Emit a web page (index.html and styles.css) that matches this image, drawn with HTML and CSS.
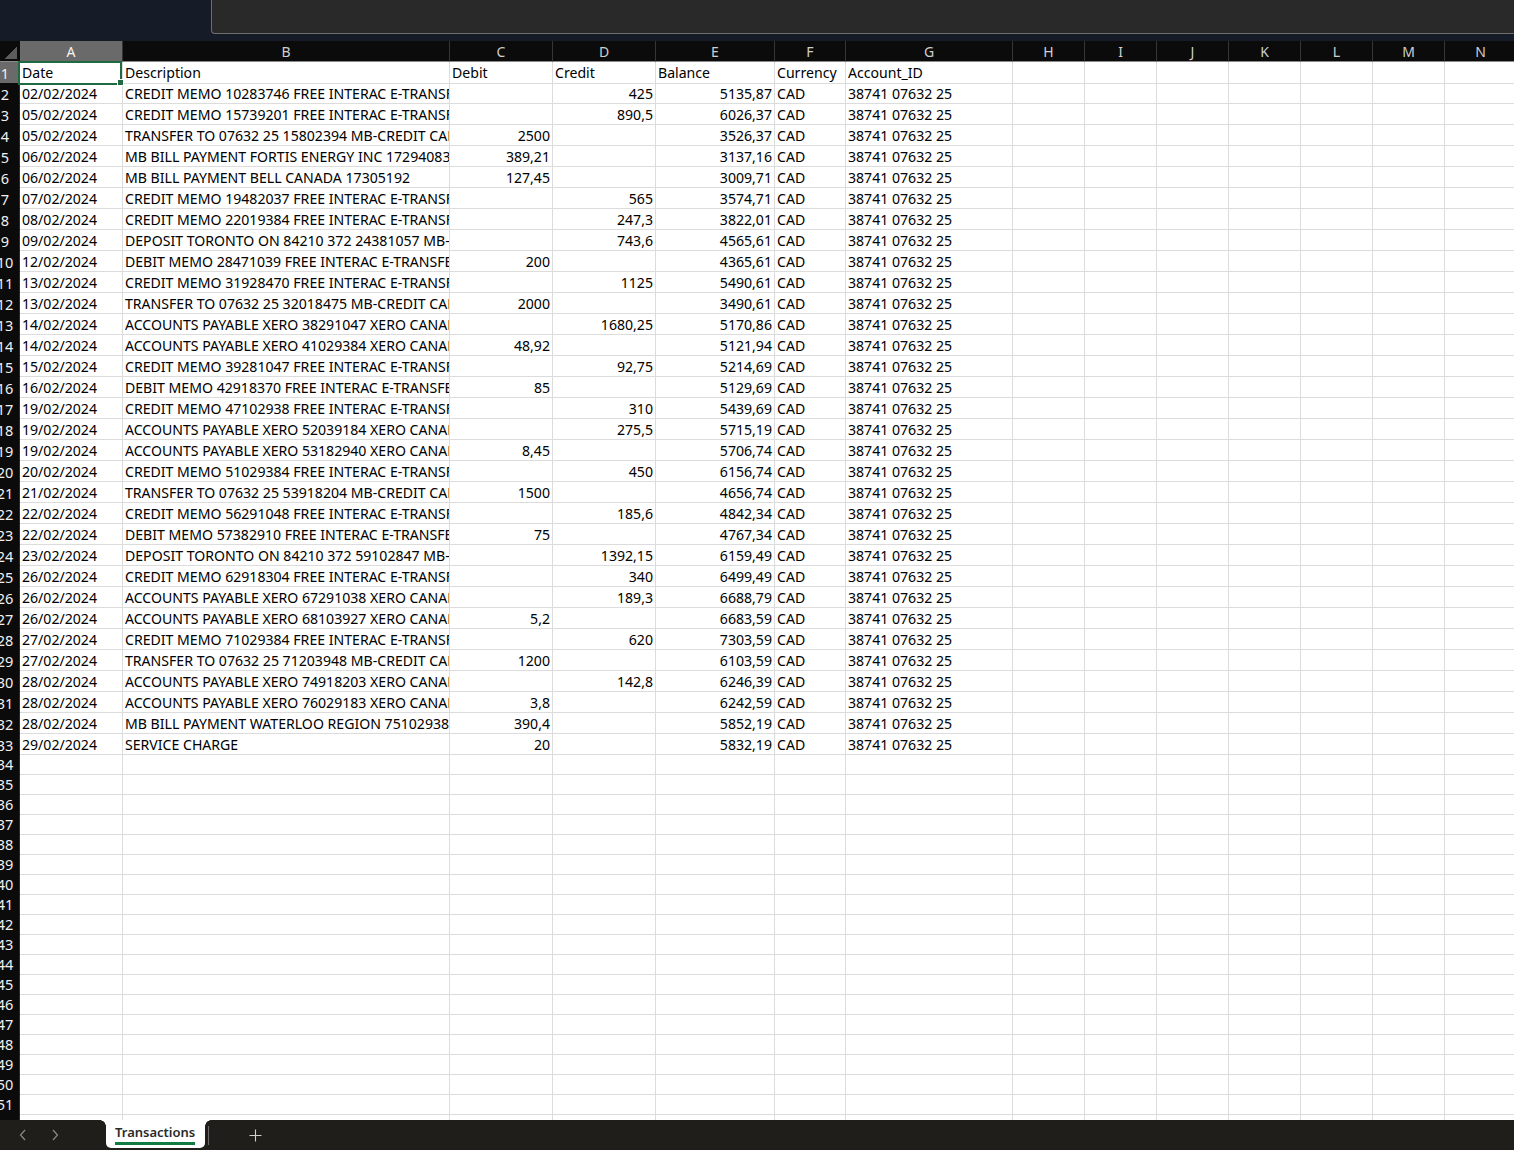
FILE: index.html
```html
<!DOCTYPE html>
<html>
<head>
<meta charset="utf-8">
<link rel="stylesheet" href="styles.css">
</head>
<body>
<div class="topbar"><div class="fbox"></div></div>
<div class="sheet">
<div class="r hd"><div class="corner"></div><div class="sel">A</div><div>B</div><div>C</div><div>D</div><div>E</div><div>F</div><div>G</div><div>H</div><div>I</div><div>J</div><div>K</div><div>L</div><div>M</div><div>N</div></div>
<div class="r"><div class="h sel"><span>1</span></div><div class="a1">Date<i class="selbox"></i><i class="handle"></i></div><div>Description</div><div>Debit</div><div>Credit</div><div>Balance</div><div>Currency</div><div>Account_ID</div><div></div><div></div><div></div><div></div><div></div><div></div><div></div></div>
<div class="r"><div class="h"><span>2</span></div><div>02/02/2024</div><div>CREDIT MEMO 10283746 FREE INTERAC E-TRANSFER</div><div class="n"></div><div class="n">425</div><div class="n">5135,87</div><div>CAD</div><div>38741 07632 25</div><div></div><div></div><div></div><div></div><div></div><div></div><div></div></div>
<div class="r"><div class="h"><span>3</span></div><div>05/02/2024</div><div>CREDIT MEMO 15739201 FREE INTERAC E-TRANSFER</div><div class="n"></div><div class="n">890,5</div><div class="n">6026,37</div><div>CAD</div><div>38741 07632 25</div><div></div><div></div><div></div><div></div><div></div><div></div><div></div></div>
<div class="r"><div class="h"><span>4</span></div><div>05/02/2024</div><div>TRANSFER TO 07632 25 15802394 MB-CREDIT CARD/LOC PAY</div><div class="n">2500</div><div class="n"></div><div class="n">3526,37</div><div>CAD</div><div>38741 07632 25</div><div></div><div></div><div></div><div></div><div></div><div></div><div></div></div>
<div class="r"><div class="h"><span>5</span></div><div>06/02/2024</div><div>MB BILL PAYMENT FORTIS ENERGY INC 17294083</div><div class="n">389,21</div><div class="n"></div><div class="n">3137,16</div><div>CAD</div><div>38741 07632 25</div><div></div><div></div><div></div><div></div><div></div><div></div><div></div></div>
<div class="r"><div class="h"><span>6</span></div><div>06/02/2024</div><div>MB BILL PAYMENT BELL CANADA 17305192</div><div class="n">127,45</div><div class="n"></div><div class="n">3009,71</div><div>CAD</div><div>38741 07632 25</div><div></div><div></div><div></div><div></div><div></div><div></div><div></div></div>
<div class="r"><div class="h"><span>7</span></div><div>07/02/2024</div><div>CREDIT MEMO 19482037 FREE INTERAC E-TRANSFER</div><div class="n"></div><div class="n">565</div><div class="n">3574,71</div><div>CAD</div><div>38741 07632 25</div><div></div><div></div><div></div><div></div><div></div><div></div><div></div></div>
<div class="r"><div class="h"><span>8</span></div><div>08/02/2024</div><div>CREDIT MEMO 22019384 FREE INTERAC E-TRANSFER</div><div class="n"></div><div class="n">247,3</div><div class="n">3822,01</div><div>CAD</div><div>38741 07632 25</div><div></div><div></div><div></div><div></div><div></div><div></div><div></div></div>
<div class="r"><div class="h"><span>9</span></div><div>09/02/2024</div><div>DEPOSIT TORONTO ON 84210 372 24381057 MB-TRANSFER</div><div class="n"></div><div class="n">743,6</div><div class="n">4565,61</div><div>CAD</div><div>38741 07632 25</div><div></div><div></div><div></div><div></div><div></div><div></div><div></div></div>
<div class="r"><div class="h"><span>10</span></div><div>12/02/2024</div><div>DEBIT MEMO 28471039 FREE INTERAC E-TRANSFER</div><div class="n">200</div><div class="n"></div><div class="n">4365,61</div><div>CAD</div><div>38741 07632 25</div><div></div><div></div><div></div><div></div><div></div><div></div><div></div></div>
<div class="r"><div class="h"><span>11</span></div><div>13/02/2024</div><div>CREDIT MEMO 31928470 FREE INTERAC E-TRANSFER</div><div class="n"></div><div class="n">1125</div><div class="n">5490,61</div><div>CAD</div><div>38741 07632 25</div><div></div><div></div><div></div><div></div><div></div><div></div><div></div></div>
<div class="r"><div class="h"><span>12</span></div><div>13/02/2024</div><div>TRANSFER TO 07632 25 32018475 MB-CREDIT CARD/LOC PAY</div><div class="n">2000</div><div class="n"></div><div class="n">3490,61</div><div>CAD</div><div>38741 07632 25</div><div></div><div></div><div></div><div></div><div></div><div></div><div></div></div>
<div class="r"><div class="h"><span>13</span></div><div>14/02/2024</div><div>ACCOUNTS PAYABLE XERO 38291047 XERO CANADA</div><div class="n"></div><div class="n">1680,25</div><div class="n">5170,86</div><div>CAD</div><div>38741 07632 25</div><div></div><div></div><div></div><div></div><div></div><div></div><div></div></div>
<div class="r"><div class="h"><span>14</span></div><div>14/02/2024</div><div>ACCOUNTS PAYABLE XERO 41029384 XERO CANADA</div><div class="n">48,92</div><div class="n"></div><div class="n">5121,94</div><div>CAD</div><div>38741 07632 25</div><div></div><div></div><div></div><div></div><div></div><div></div><div></div></div>
<div class="r"><div class="h"><span>15</span></div><div>15/02/2024</div><div>CREDIT MEMO 39281047 FREE INTERAC E-TRANSFER</div><div class="n"></div><div class="n">92,75</div><div class="n">5214,69</div><div>CAD</div><div>38741 07632 25</div><div></div><div></div><div></div><div></div><div></div><div></div><div></div></div>
<div class="r"><div class="h"><span>16</span></div><div>16/02/2024</div><div>DEBIT MEMO 42918370 FREE INTERAC E-TRANSFER</div><div class="n">85</div><div class="n"></div><div class="n">5129,69</div><div>CAD</div><div>38741 07632 25</div><div></div><div></div><div></div><div></div><div></div><div></div><div></div></div>
<div class="r"><div class="h"><span>17</span></div><div>19/02/2024</div><div>CREDIT MEMO 47102938 FREE INTERAC E-TRANSFER</div><div class="n"></div><div class="n">310</div><div class="n">5439,69</div><div>CAD</div><div>38741 07632 25</div><div></div><div></div><div></div><div></div><div></div><div></div><div></div></div>
<div class="r"><div class="h"><span>18</span></div><div>19/02/2024</div><div>ACCOUNTS PAYABLE XERO 52039184 XERO CANADA</div><div class="n"></div><div class="n">275,5</div><div class="n">5715,19</div><div>CAD</div><div>38741 07632 25</div><div></div><div></div><div></div><div></div><div></div><div></div><div></div></div>
<div class="r"><div class="h"><span>19</span></div><div>19/02/2024</div><div>ACCOUNTS PAYABLE XERO 53182940 XERO CANADA</div><div class="n">8,45</div><div class="n"></div><div class="n">5706,74</div><div>CAD</div><div>38741 07632 25</div><div></div><div></div><div></div><div></div><div></div><div></div><div></div></div>
<div class="r"><div class="h"><span>20</span></div><div>20/02/2024</div><div>CREDIT MEMO 51029384 FREE INTERAC E-TRANSFER</div><div class="n"></div><div class="n">450</div><div class="n">6156,74</div><div>CAD</div><div>38741 07632 25</div><div></div><div></div><div></div><div></div><div></div><div></div><div></div></div>
<div class="r"><div class="h"><span>21</span></div><div>21/02/2024</div><div>TRANSFER TO 07632 25 53918204 MB-CREDIT CARD/LOC PAY</div><div class="n">1500</div><div class="n"></div><div class="n">4656,74</div><div>CAD</div><div>38741 07632 25</div><div></div><div></div><div></div><div></div><div></div><div></div><div></div></div>
<div class="r"><div class="h"><span>22</span></div><div>22/02/2024</div><div>CREDIT MEMO 56291048 FREE INTERAC E-TRANSFER</div><div class="n"></div><div class="n">185,6</div><div class="n">4842,34</div><div>CAD</div><div>38741 07632 25</div><div></div><div></div><div></div><div></div><div></div><div></div><div></div></div>
<div class="r"><div class="h"><span>23</span></div><div>22/02/2024</div><div>DEBIT MEMO 57382910 FREE INTERAC E-TRANSFER</div><div class="n">75</div><div class="n"></div><div class="n">4767,34</div><div>CAD</div><div>38741 07632 25</div><div></div><div></div><div></div><div></div><div></div><div></div><div></div></div>
<div class="r"><div class="h"><span>24</span></div><div>23/02/2024</div><div>DEPOSIT TORONTO ON 84210 372 59102847 MB-TRANSFER</div><div class="n"></div><div class="n">1392,15</div><div class="n">6159,49</div><div>CAD</div><div>38741 07632 25</div><div></div><div></div><div></div><div></div><div></div><div></div><div></div></div>
<div class="r"><div class="h"><span>25</span></div><div>26/02/2024</div><div>CREDIT MEMO 62918304 FREE INTERAC E-TRANSFER</div><div class="n"></div><div class="n">340</div><div class="n">6499,49</div><div>CAD</div><div>38741 07632 25</div><div></div><div></div><div></div><div></div><div></div><div></div><div></div></div>
<div class="r"><div class="h"><span>26</span></div><div>26/02/2024</div><div>ACCOUNTS PAYABLE XERO 67291038 XERO CANADA</div><div class="n"></div><div class="n">189,3</div><div class="n">6688,79</div><div>CAD</div><div>38741 07632 25</div><div></div><div></div><div></div><div></div><div></div><div></div><div></div></div>
<div class="r"><div class="h"><span>27</span></div><div>26/02/2024</div><div>ACCOUNTS PAYABLE XERO 68103927 XERO CANADA</div><div class="n">5,2</div><div class="n"></div><div class="n">6683,59</div><div>CAD</div><div>38741 07632 25</div><div></div><div></div><div></div><div></div><div></div><div></div><div></div></div>
<div class="r"><div class="h"><span>28</span></div><div>27/02/2024</div><div>CREDIT MEMO 71029384 FREE INTERAC E-TRANSFER</div><div class="n"></div><div class="n">620</div><div class="n">7303,59</div><div>CAD</div><div>38741 07632 25</div><div></div><div></div><div></div><div></div><div></div><div></div><div></div></div>
<div class="r"><div class="h"><span>29</span></div><div>27/02/2024</div><div>TRANSFER TO 07632 25 71203948 MB-CREDIT CARD/LOC PAY</div><div class="n">1200</div><div class="n"></div><div class="n">6103,59</div><div>CAD</div><div>38741 07632 25</div><div></div><div></div><div></div><div></div><div></div><div></div><div></div></div>
<div class="r"><div class="h"><span>30</span></div><div>28/02/2024</div><div>ACCOUNTS PAYABLE XERO 74918203 XERO CANADA</div><div class="n"></div><div class="n">142,8</div><div class="n">6246,39</div><div>CAD</div><div>38741 07632 25</div><div></div><div></div><div></div><div></div><div></div><div></div><div></div></div>
<div class="r"><div class="h"><span>31</span></div><div>28/02/2024</div><div>ACCOUNTS PAYABLE XERO 76029183 XERO CANADA</div><div class="n">3,8</div><div class="n"></div><div class="n">6242,59</div><div>CAD</div><div>38741 07632 25</div><div></div><div></div><div></div><div></div><div></div><div></div><div></div></div>
<div class="r"><div class="h"><span>32</span></div><div>28/02/2024</div><div>MB BILL PAYMENT WATERLOO REGION 75102938</div><div class="n">390,4</div><div class="n"></div><div class="n">5852,19</div><div>CAD</div><div>38741 07632 25</div><div></div><div></div><div></div><div></div><div></div><div></div><div></div></div>
<div class="r"><div class="h"><span>33</span></div><div>29/02/2024</div><div>SERVICE CHARGE</div><div class="n">20</div><div class="n"></div><div class="n">5832,19</div><div>CAD</div><div>38741 07632 25</div><div></div><div></div><div></div><div></div><div></div><div></div><div></div></div>
<div class="r s"><div class="h"><span>34</span></div><div></div><div></div><div></div><div></div><div></div><div></div><div></div><div></div><div></div><div></div><div></div><div></div><div></div><div></div></div>
<div class="r s"><div class="h"><span>35</span></div><div></div><div></div><div></div><div></div><div></div><div></div><div></div><div></div><div></div><div></div><div></div><div></div><div></div><div></div></div>
<div class="r s"><div class="h"><span>36</span></div><div></div><div></div><div></div><div></div><div></div><div></div><div></div><div></div><div></div><div></div><div></div><div></div><div></div><div></div></div>
<div class="r s"><div class="h"><span>37</span></div><div></div><div></div><div></div><div></div><div></div><div></div><div></div><div></div><div></div><div></div><div></div><div></div><div></div><div></div></div>
<div class="r s"><div class="h"><span>38</span></div><div></div><div></div><div></div><div></div><div></div><div></div><div></div><div></div><div></div><div></div><div></div><div></div><div></div><div></div></div>
<div class="r s"><div class="h"><span>39</span></div><div></div><div></div><div></div><div></div><div></div><div></div><div></div><div></div><div></div><div></div><div></div><div></div><div></div><div></div></div>
<div class="r s"><div class="h"><span>40</span></div><div></div><div></div><div></div><div></div><div></div><div></div><div></div><div></div><div></div><div></div><div></div><div></div><div></div><div></div></div>
<div class="r s"><div class="h"><span>41</span></div><div></div><div></div><div></div><div></div><div></div><div></div><div></div><div></div><div></div><div></div><div></div><div></div><div></div><div></div></div>
<div class="r s"><div class="h"><span>42</span></div><div></div><div></div><div></div><div></div><div></div><div></div><div></div><div></div><div></div><div></div><div></div><div></div><div></div><div></div></div>
<div class="r s"><div class="h"><span>43</span></div><div></div><div></div><div></div><div></div><div></div><div></div><div></div><div></div><div></div><div></div><div></div><div></div><div></div><div></div></div>
<div class="r s"><div class="h"><span>44</span></div><div></div><div></div><div></div><div></div><div></div><div></div><div></div><div></div><div></div><div></div><div></div><div></div><div></div><div></div></div>
<div class="r s"><div class="h"><span>45</span></div><div></div><div></div><div></div><div></div><div></div><div></div><div></div><div></div><div></div><div></div><div></div><div></div><div></div><div></div></div>
<div class="r s"><div class="h"><span>46</span></div><div></div><div></div><div></div><div></div><div></div><div></div><div></div><div></div><div></div><div></div><div></div><div></div><div></div><div></div></div>
<div class="r s"><div class="h"><span>47</span></div><div></div><div></div><div></div><div></div><div></div><div></div><div></div><div></div><div></div><div></div><div></div><div></div><div></div><div></div></div>
<div class="r s"><div class="h"><span>48</span></div><div></div><div></div><div></div><div></div><div></div><div></div><div></div><div></div><div></div><div></div><div></div><div></div><div></div><div></div></div>
<div class="r s"><div class="h"><span>49</span></div><div></div><div></div><div></div><div></div><div></div><div></div><div></div><div></div><div></div><div></div><div></div><div></div><div></div><div></div></div>
<div class="r s"><div class="h"><span>50</span></div><div></div><div></div><div></div><div></div><div></div><div></div><div></div><div></div><div></div><div></div><div></div><div></div><div></div><div></div></div>
<div class="r s"><div class="h"><span>51</span></div><div></div><div></div><div></div><div></div><div></div><div></div><div></div><div></div><div></div><div></div><div></div><div></div><div></div><div></div></div>
<div class="r s"><div class="h"><span>52</span></div><div></div><div></div><div></div><div></div><div></div><div></div><div></div><div></div><div></div><div></div><div></div><div></div><div></div><div></div></div>
</div>
<div class="tabbar">
  <div class="nav">
    <svg width="8" height="12" viewBox="0 0 8 12"><path d="M6 1 L1.5 6 L6 11" fill="none" stroke="#8a8a8a" stroke-width="1.2"/></svg>
    <svg width="8" height="12" viewBox="0 0 8 12"><path d="M2 1 L6.5 6 L2 11" fill="none" stroke="#8a8a8a" stroke-width="1.2"/></svg>
  </div>
  <div class="tab"><span class="tabtext">Transactions</span></div>
  <div class="sep"></div>
  <div class="add"><svg width="13" height="13" viewBox="0 0 13 13"><path d="M6.5 0.5 V12.5 M0.5 6.5 H12.5" stroke="#cfcfcf" stroke-width="1.1"/></svg></div>
</div>
</body>
</html>
```
FILE: styles.css
```css
* { box-sizing: border-box; }
html, body { margin: 0; padding: 0; }
body {
  width: 1514px;
  height: 1150px;
  overflow: hidden;
  background: #151c28;
  font-family: "Noto Sans", "Open Sans", sans-serif;
  display: flex;
  flex-direction: column;
}
.topbar {
  height: 41px;
  flex: none;
  background: #151c28;
  padding-left: 211px;
}
.fbox {
  height: 34px;
  background: #292929;
  border-left: 1px solid #6e6e6e;
  border-bottom: 1px solid #6e6e6e;
  border-bottom-left-radius: 4px;
}
.sheet {
  flex: 1;
  overflow: hidden;
  background: #fff;
}
.r {
  display: grid;
  grid-template-columns: 20px 103px 327px 103px 103px 119px 71px 167px repeat(7, 72px);
  height: 21px;
}
.r.s { height: 20px; }
.r > div {
  border-right: 1px solid #dcdcdc;
  border-bottom: 1px solid #dcdcdc;
  overflow: hidden;
  white-space: nowrap;
  font-size: 14.1px;
  line-height: 20px;
  padding: 1px 2px 0;
  color: #000;
}
.r.s > div { line-height: 19px; padding-top: 0; }
.r > .n { text-align: right; }
.r.hd { background: #0b0b0b; }
.r.hd > div {
  border-right: 1px solid #353535;
  border-bottom: 1px solid #8a8a8a;
  color: #cfcfcf;
  text-align: center;
  font-size: 14px;
  padding: 1px 0 0;
}
.r.hd > .corner {
  background: linear-gradient(135deg, #0b0b0b 55%, #5c5c5c 55%) no-repeat;
  background-size: 14px 14px;
  background-position: 3px 4px;
  background-color: #0b0b0b;
  border-right: 1px solid #0b0b0b;
}
.r.hd > .sel { background: #6a6a6a; color: #f4f4f4; }
.r > .h {
  background: #0b0b0b;
  border-right: 1px solid #2c2c2c;
  border-bottom: 1px solid #0b0b0b;
  color: #f0f0f0;
  padding: 1px 0 0;
  font-size: 14.5px;
}
.r.s > .h { padding-top: 0; }
.r > .h span {
  display: block;
  width: 30px;
  margin-left: -10px;
  text-align: center;
}
.r > .h.sel { background: #6a6a6a; border-bottom-color: #6a6a6a; }
.r > .a1 {
  position: relative;
  overflow: visible;
}
.selbox {
  position: absolute;
  left: -2px;
  top: -1px;
  right: 0;
  bottom: -2px;
  border: 2px solid #1e6b41;
  z-index: 2;
}
.handle {
  position: absolute;
  left: 97px;
  top: 17px;
  width: 7px;
  height: 7px;
  background: #1e6b41;
  border: 1px solid #fff;
  z-index: 3;
}
.tabbar {
  height: 30px;
  flex: none;
  background: #1f1e1a;
  display: flex;
  align-items: flex-start;
}
.nav {
  width: 106px;
  height: 30px;
  display: flex;
  align-items: center;
  gap: 24px;
  padding-left: 19px;
}
.tab {
  position: relative;
  width: 99px;
  height: 28px;
  background: #fff;
  border-radius: 0 0 5px 5px;
  padding-left: 9px;
}
.tab::before, .tab::after {
  content: "";
  position: absolute;
  top: 0;
  width: 6px;
  height: 6px;
}
.tab::before {
  left: -6px;
  background: radial-gradient(circle at 0 100%, #1f1e1a 5.5px, #fff 6px);
}
.tab::after {
  right: -6px;
  background: radial-gradient(circle at 100% 100%, #1f1e1a 5.5px, #fff 6px);
}
.tabtext {
  display: inline-block;
  margin-top: 4px;
  font-size: 13px;
  font-weight: 600;
  line-height: 17px;
  color: #2a2a2a;
  padding-bottom: 1px;
  border-bottom: 3px solid #107c41;
}
.sep {
  width: 1px;
  height: 21px;
  margin-top: 4px;
  margin-left: 3px;
  background: #6a6a6a;
}
.add {
  margin-left: 40px;
  height: 30px;
  display: flex;
  align-items: center;
}
.add svg { display: block; }
```
